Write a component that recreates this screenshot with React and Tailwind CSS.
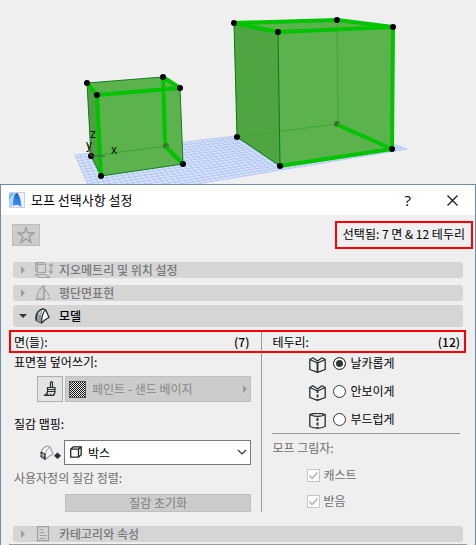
import React from "react";

const gridBack = [75, 155, 338, 124];
const gridFront = [95, 201, 407, 149];

function lerp(a, b, t) {
  return a + (b - a) * t;
}

function FloorGrid() {
  const lines = [];
  for (let i = 0; i <= 56; i++) {
    const t = i / 56;
    lines.push([
      lerp(gridBack[0], gridBack[2], t),
      lerp(gridBack[1], gridBack[3], t),
      lerp(gridFront[0], gridFront[2], t),
      lerp(gridFront[1], gridFront[3], t),
    ]);
  }
  for (let i = 0; i <= 16; i++) {
    const t = i / 16;
    lines.push([
      lerp(gridBack[0], gridFront[0], t),
      lerp(gridBack[1], gridFront[1], t),
      lerp(gridBack[2], gridFront[2], t),
      lerp(gridBack[3], gridFront[3], t),
    ]);
  }
  return (
    <g>
      <polygon points="75,155 338,124 407,149 95,201" fill="#dce5f5" />
      {lines.map((l, i) => (
        <line key={i} x1={l[0]} y1={l[1]} x2={l[2]} y2={l[3]} stroke="#9db9ff" strokeWidth="0.8" opacity="0.8" />
      ))}
    </g>
  );
}

function Dots({ points, r }) {
  return points.map(([x, y]) => <circle key={x + "-" + y} cx={x} cy={y} r={r} fill="#000" />);
}

function Scene() {
  return (
    <svg className="block h-[184px] w-full shrink-0" viewBox="0 0 476 184" preserveAspectRatio="xMinYMin slice" role="img" aria-label="모프">
      <rect width="476" height="184" fill="#efefef" />
      <FloorGrid />
      <polygon points="87,83 163,77 180,88 183,164 101,176 91,156" fill="#5cb34d" />
      <polygon points="87,83 97,95 101,176 91,156" fill="#4f9f43" />
      <g fill="none" stroke="#118020" strokeWidth="1">
        <path d="M87 83 163 77M180 88 183 164 101 176 91 156 87 83" />
        <path d="M91 156 166 146" stroke="#3da034" />
      </g>
      <circle cx="166" cy="146" r="3" fill="#397432" />
      <g fill="none" stroke="#00c400" strokeWidth="4" strokeLinejoin="round">
        <path d="M87 83 97 95 101 176M97 95 180 88 163 77 165 143M166 147 183 164" />
      </g>
      <Dots r={3} points={[[87, 83], [163, 77], [180, 88], [97, 95], [183, 164], [101, 176], [91, 156]]} />
      <path d="M91 156h14M91 156l-3-12" stroke="#555" fill="none" />
      <g fill="#111" fontFamily="Liberation Sans, sans-serif" fontSize="12">
        <text x="90" y="138">z</text>
        <text x="86" y="149">y</text>
        <text x="111" y="154">x</text>
      </g>

      <polygon points="234,23 337,20 393,27 392,149 280,166 237,137" fill="#5cb34d" />
      <polygon points="234,23 278,32 280,166 237,137" fill="#4ea541" />
      <path d="M337 20 338 124M237 137 337 124" stroke="#3ba832" fill="none" />
      <path d="M234 23 237 137 280 166 278 32" stroke="#087d13" fill="none" />
      <circle cx="337" cy="124" r="3" fill="#397432" />
      <g fill="none" stroke="#00c400" strokeWidth="4" strokeLinejoin="round">
        <path d="M234 23 337 20 393 27 278 32Z" />
        <path d="M338 125 392 149 280 166M393 27 392 149" />
      </g>
      <Dots r={3} points={[[234, 23], [337, 20], [393, 27], [278, 32], [392, 149], [280, 166], [237, 137]]} />
    </svg>
  );
}

function LogoIcon() {
  return (
    <svg className="size-4" viewBox="0 0 16 16" aria-hidden="true">
      <defs>
        <linearGradient id="arch" x1="0" y1="0" x2="0" y2="1">
          <stop offset="0" stopColor="#1d5fc4" />
          <stop offset="1" stopColor="#3f9bff" />
        </linearGradient>
      </defs>
      <rect x="0.5" y="0.5" width="15" height="15" fill="#f1f3f5" stroke="#c9d2da" />
      <path d="M0 11V3L2 1h4C3 3 1 7 0 11Z" fill="#6db4ff" />
      <path d="M0 15C1 8 4 2 7 1L5 7 3 15Z" fill="#a9d2ff" />
      <path d="M4 14C4 7 5.500 1.500 7.500 1S12 7 12.500 15Q8 11.500 4 14Z" fill="url(#arch)" />
    </svg>
  );
}

function StarIcon() {
  return (
    <svg className="size-[18px]" viewBox="0 0 18 18" fill="none" stroke="#9a9ca0" strokeWidth="1.3" aria-hidden="true">
      <path d="M9 1.500 11 7h5.800l-4.600 3.500 1.700 5.800L9 12.900l-4.900 3.400 1.700-5.800L1.200 7H7Z" />
    </svg>
  );
}

function GeometryIcon() {
  return (
    <svg className="h-4 w-5" viewBox="0 0 20 16" fill="none" stroke="#a1a4a6" strokeWidth="1.2" aria-hidden="true">
      <path d="M2.500 2.500h8v8h-8ZM.6.6h8.200l1.700 1.900M.6.6v8.200l1.900 1.700M.6.6l1.900 1.900M0 12.500h10.500l4 3H4.500Z" />
      <path d="M16 2v9M14 4l2-2.300L18 4M14 9l2 2.300L18 9" />
    </svg>
  );
}

function PlanIcon() {
  return (
    <svg className="h-4 w-5" viewBox="0 0 20 16" fill="none" stroke="#a1a4a6" strokeWidth="1.2" aria-hidden="true">
      <path d="M1.500 14C2 7 4.500 3 9 .8V13.500Z" fill="#cbcdce" />
      <path d="M9 4l3.500 4L15 13.500H11" strokeDasharray="4 1.200" />
      <path d="M9 1v14" strokeDasharray="4 1" />
      <path d="M1 14.500h9" />
    </svg>
  );
}

function ModelIcon() {
  return (
    <svg className="h-4 w-5" viewBox="0 0 20 16" fill="none" stroke="#252d31" strokeWidth="1.3" strokeLinejoin="round" aria-hidden="true">
      <path d="M1.200 12.500V8.500Q2 2.500 8 .8L10.800 2 14 9.500 10.500 11.500 6.500 15Z" fill="#fff" />
      <path d="M1.200 12.500V8.500Q2 2.500 8 .8 6 4 6.500 15Z" fill="#92999c" stroke="none" />
      <path d="M2 6Q3 2.500 7 1.500 5.500 3 5.500 7Z" fill="#cfd3d5" stroke="none" />
      <path d="M10.800 2Q7 4 6.500 15M1.200 12.500V8.500Q2 2.500 8 .8" />
    </svg>
  );
}

function PageIcon() {
  return (
    <svg className="h-4 w-5" viewBox="0 0 20 16" fill="none" stroke="#9b9fa2" aria-hidden="true">
      <path d="M2.500.6h11v14h-11Z" strokeWidth="1.2" />
      <path d="M4.500 3.500h4M4.500 6.500h5M4.500 9.500h7M4.500 12.500h6" />
    </svg>
  );
}

function BrushIcon() {
  return (
    <svg className="size-4" viewBox="0 0 16 16" fill="none" stroke="#252f35" strokeWidth="1.2" aria-hidden="true">
      <path d="M8.500 6V1.500Q9.500-.2 10.500 1.500V6M5.500 6.500h7.500V10.500H5.500ZM5.500 8.500h7.500M5.500 10.500Q5.500 13 2 14.500h9.500Q13 13.500 13 10.500M5 14.500l1.200-1.800M8 14.500l1-1.800M11 14.500l.8-1.800" />
    </svg>
  );
}

function MapIcon() {
  return (
    <svg className="h-4 w-[22px]" viewBox="0 0 22 16" fill="none" strokeLinejoin="round" aria-hidden="true">
      <path d="M1 7.500Q2 2.500 7.500 1l2.500 1 3 7-3.500 2-4 3.500V9Z" fill="#f5f5f5" stroke="#9da1a3" strokeWidth="1.2" />
      <path d="M5.500 9Q6 4 10 2" stroke="#9da1a3" />
      <path d="M1 7 5 9v5.500L1 12Z" fill="#455058" stroke="#252f35" />
      <path d="M1 9.500l4 1.500M3 8v5.500" stroke="#ddd" strokeWidth="0.7" />
      <path d="M14 10.800 17.500 7.500 21 10.800 17.500 14Z" fill="#252f35" />
    </svg>
  );
}

function BoxIcon() {
  return (
    <svg className="pointer-events-none absolute left-1.5 top-1.5 size-3" viewBox="0 0 12 12" fill="none" stroke="#1d2529" strokeWidth="1.3" aria-hidden="true">
      <path d="M.7 3.200h7.800v8H.7ZM.7 3.200 3.200.8h8v8L8.500 11.200M8.500 3.200 11.200.8" />
    </svg>
  );
}

function EdgeIcon({ kind }) {
  return (
    <svg className="mt-1 h-4 w-[17px]" viewBox="0 0 17 16" fill="none" stroke="#252f35" strokeWidth="1.3" strokeLinejoin="round" aria-hidden="true">
      {kind === "smooth" ? (
        <path d="M.8 1.500Q8.500 5.500 16.200 1.500V13.500Q8.500 16.800 .8 13.500ZM.8 1.500Q8.500-1 16.200 1.500" />
      ) : (
        <path d="M.8 2.500 4 .8 8.500 4 13 .8 16.200 2.500V12.500L8.500 15.300.8 12.500ZM.8 2.500 8.500 6 16.200 2.500" />
      )}
      <path d="M8.500 5v10.500" strokeWidth="1.8" strokeDasharray={kind === "sharp" ? undefined : "3 1.5"} />
    </svg>
  );
}

function SectionBar({ label, icon, open }) {
  return (
    <button
      type="button"
      aria-expanded={Boolean(open)}
      className={`flex w-full items-center rounded-[3px] bg-[#d5d5d5] text-left font-medium ${open ? "h-[22px] text-black" : "h-4 text-[#77797b]"}`}
    >
      <span className="flex w-[22px] shrink-0 items-center pl-1.5">
        <svg className="size-2" viewBox="0 0 8 8" fill={open ? "#30363a" : "#9b9d9f"} aria-hidden="true">
          {open ? <path d="M0 2h8L4 6Z" /> : <path d="M2 0v8l4-4Z" />}
        </svg>
      </span>
      <span className="flex w-6 shrink-0 items-center">{icon}</span>
      <span>{label}</span>
    </button>
  );
}

function EdgeOption({ kind, label, checked }) {
  return (
    <label className="flex h-5 items-center">
      <EdgeIcon kind={kind} />
      <input
        type="radio"
        name="edge"
        defaultChecked={checked}
        className="ml-[7px] mr-1 size-[13px] shrink-0 appearance-none rounded-full border border-[#333] bg-white checked:bg-[#333] checked:shadow-[inset_0_0_0_2px_#fff]"
      />
      {label}
    </label>
  );
}

function ShadowOption({ label }) {
  return (
    <label className="flex h-[26px] items-center text-[#6d6d6d]">
      <span className="relative mr-[3px] size-[13px]">
        <input type="checkbox" defaultChecked disabled className="block size-[13px] appearance-none border border-[#c6c6c6] bg-white" />
        <svg className="pointer-events-none absolute inset-0 size-[13px]" viewBox="0 0 13 13" fill="none" stroke="#b5b5b5" strokeWidth="1.5" aria-hidden="true">
          <path d="M2.500 6.500 5 9.500 10.500 3.500" />
        </svg>
      </span>
      {label}
    </label>
  );
}

export default function App() {
  return (
    <main className="flex min-h-screen flex-col bg-[#efefef] font-['Noto_Sans_CJK_KR','Noto_Sans',sans-serif] text-xs leading-4 text-black">
      <Scene />
      <section className="flex grow flex-col border-x border-t border-[#6c8ca8]">
        <header className="flex h-[30px] items-center bg-white pl-2 pr-[17px]">
          <LogoIcon />
          <h1 className="ml-1.5 grow text-[13px] font-normal leading-4">모프 선택사항 설정</h1>
          <button type="button" aria-label="도움말" className="mr-9 font-['Open_Sans',sans-serif] text-[15px]">?</button>
          <button type="button" aria-label="닫기">
            <svg className="size-[11px]" viewBox="0 0 11 11" stroke="#111" strokeWidth="1.1" aria-hidden="true">
              <path d="M.5.5 10.500 10.500M10.500.5.5 10.500" />
            </svg>
          </button>
        </header>

        <div className="flex h-[47px] items-start justify-between pl-[11px] pr-0.5 pt-1.5">
          <button type="button" aria-label="즐겨찾기" className="mt-[3px] flex h-[22px] w-7 items-center justify-center border border-[#bcbcbc] bg-[#cdcdcd]">
            <StarIcon />
          </button>
          <p className="flex h-7 items-center border-2 border-[#fb0000] px-1.5 pb-0.5">선택됨: 7 면 &amp; 12 테두리</p>
        </div>

        <div className="flex flex-col px-3 pb-[3px]">
          <SectionBar label="지오메트리 및 위치 설정" icon={<GeometryIcon />} />
          <div className="mb-1 mt-[7px]">
            <SectionBar label="평단면표현" icon={<PlanIcon />} />
          </div>
          <SectionBar label="모델" icon={<ModelIcon />} open />
        </div>

        <div className="ml-2 mr-[9px] flex h-[23px] border-2 border-[#fb0000]">
          <h2 className="flex w-[55.5%] items-center justify-between border-r border-[#9b9b9b] pl-[3px] pr-3 font-normal">
            <span>면(들):</span>
            <b className="font-medium">(7)</b>
          </h2>
          <h2 className="flex grow items-center justify-between pl-2.5 pr-1 font-normal">
            <span>테두리:</span>
            <b className="font-medium">(12)</b>
          </h2>
        </div>

        <div className="ml-2.5 mr-[11px] flex h-[159px]">
          <div className="w-[55.5%] border-r border-[#9b9b9b] pl-[3px] pr-2.5">
            <h3 className="pt-px font-normal">표면질 덮어쓰기:</h3>
            <div className="mt-1.5 flex gap-0.5 pl-[23px]">
              <button type="button" aria-label="덮어쓰기" className="flex size-[26px] shrink-0 items-center justify-center border border-[#adadad] bg-[#e3e3e3]">
                <BrushIcon />
              </button>
              <button type="button" disabled className="flex h-[26px] grow items-center border border-[#bfbfbf] bg-[#cccccc] px-[3px] text-[#888]">
                <svg className="mr-1.5 size-[17px]" viewBox="0 0 17 17" aria-hidden="true">
                  <defs>
                    <pattern id="checks" width="2" height="2" patternUnits="userSpaceOnUse">
                      <path d="M0 0h1v1H0ZM1 1h1v1H1Z" fill="#111" />
                    </pattern>
                  </defs>
                  <rect x=".5" y=".5" width="16" height="16" fill="#eee" stroke="#555" />
                  <rect x="1" y="1" width="15" height="15" fill="url(#checks)" shapeRendering="crispEdges" />
                </svg>
                <span className="grow text-left">페인트 - 샌드 베이지</span>
                <svg className="h-2 w-1" viewBox="0 0 4 8" fill="#999" aria-hidden="true">
                  <path d="M0 0v8l4-4Z" />
                </svg>
              </button>
            </div>
            <label htmlFor="mapping" className="mt-3.5 block">질감 맵핑:</label>
            <div className="mt-2 flex items-center gap-0.5 pl-[26px]">
              <MapIcon />
              <div className="relative grow">
                <select id="mapping" className="block h-[25px] w-full appearance-none border border-[#777] bg-white pl-[23px] pr-6 leading-4">
                  <option>박스</option>
                </select>
                <BoxIcon />
                <svg className="pointer-events-none absolute right-1 top-2 h-2 w-2.5" viewBox="0 0 10 8" fill="none" stroke="#333" strokeWidth="1.2" aria-hidden="true">
                  <path d="M1 2 5 6 9 2" />
                </svg>
              </div>
            </div>
            <p className="mt-[5px] text-[#6d6d6d]">사용자정의 질감 정렬:</p>
            <div className="mt-2 pl-[51px]">
              <button type="button" disabled className="flex h-[18px] w-full items-center justify-center border border-[#bfbfbf] bg-[#cccccc] text-[#808080]">질감 초기화</button>
            </div>
          </div>
          <div className="grow pl-2.5 pr-1">
            <fieldset className="space-y-2 border-b border-[#9b9b9b] pb-1 pl-[37px]">
              <EdgeOption kind="sharp" label="날카롭게" checked />
              <EdgeOption kind="hidden" label="안보이게" />
              <EdgeOption kind="smooth" label="부드럽게" />
            </fieldset>
            <h3 className="mt-1.5 font-normal text-[#6d6d6d]">모프 그림자:</h3>
            <fieldset className="mt-1.5 pl-[35px]">
              <ShadowOption label="캐스트" />
              <ShadowOption label="받음" />
            </fieldset>
          </div>
        </div>

        <div className="mx-2 mt-[14px] border-b border-[#9b9b9b] px-1 pb-0.5">
          <SectionBar label="카테고리와 속성" icon={<PageIcon />} />
        </div>
      </section>
    </main>
  );
}
